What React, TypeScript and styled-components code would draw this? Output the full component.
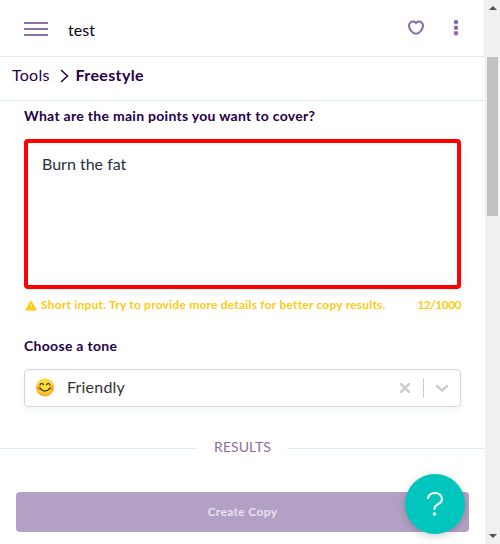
import React from "react";
import styled, { createGlobalStyle } from "styled-components";

const Global = createGlobalStyle`
  * { box-sizing: border-box; }
  body { margin: 0; background: #fff; font-family: Lato, "Liberation Sans", sans-serif; overflow: hidden; }
  button { font-family: inherit; border: 0; padding: 0; background: none; }
`;
const Shell = styled.div`
  display: flex;
  width: 500px;
  height: 544px;
  overflow: hidden;
`;
const Page = styled.main`
  position: relative;
  width: 485px;
  height: 544px;
  background: #fff;
`;
const Text = styled.span<{ $size: number; $weight?: number; $color: string; $track?: number }>`
  font-size: ${(p) => p.$size}px;
  font-weight: ${(p) => p.$weight ?? 400};
  color: ${(p) => p.$color};
  letter-spacing: ${(p) => p.$track ?? 0}px;
  line-height: 20px;
  white-space: nowrap;
`;
const Header = styled.header`
  display: flex;
  align-items: center;
  height: 57px;
  padding: 0 20px 0 24px;
  border-bottom: 1px solid #d9f0e3;
  border-right: 1px solid #d9f0e3;
`;
const Title = styled.div`
  display: flex;
  padding-top: 3px;
`;
const Menu = styled.button`
  display: flex;
  flex-direction: column;
  justify-content: space-between;
  width: 24px;
  height: 14px;
  margin: 2px 20px 0 0;
`;
const Bar = styled.span`
  height: 2px;
  background: #8e73a6;
`;
const Actions = styled.div`
  display: flex;
  align-items: center;
  gap: 24px;
  margin-left: auto;
`;
const Crumbs = styled.nav`
  display: flex;
  align-items: center;
  height: 44px;
  padding: 0 12px 7px;
  border-bottom: 1px solid #d9f0e3;
`;
const Chevron = styled.svg`
  margin: 2px 7px 0 10px;
`;
const Form = styled.section`
  display: flex;
  flex-direction: column;
  padding: 5px 24px 0;
`;
const Label = styled.label`
  display: flex;
  height: 20px;
`;
const Input = styled.div`
  height: 150px;
  margin-top: 13px;
  padding: 11px 14px;
  border: 4px solid #fe0000;
  border-radius: 4px;
  box-shadow: 0 4px 12px rgba(20, 80, 70, 0.04);
`;
const Hint = styled.div`
  display: flex;
  align-items: center;
  height: 20px;
  margin: 6px 0 21px;
`;
const Count = styled.div`
  display: flex;
  margin-left: auto;
`;
const Warning = styled.svg`
  margin: 0 4px 0 1px;
`;
const Select = styled.div`
  display: flex;
  align-items: center;
  height: 38px;
  margin-top: 13px;
  padding: 0 11px 0 10px;
  border: 1px solid #dcd1e8;
  border-radius: 4px;
  box-shadow: 0 4px 10px rgba(20, 110, 90, 0.06);
`;
const Value = styled.div`
  display: flex;
  padding-bottom: 2px;
`;
const Emoji = styled.svg`
  margin-right: 12px;
`;
const Indicators = styled.div`
  display: flex;
  align-items: center;
  margin-left: auto;
`;
const Separator = styled.span`
  width: 1px;
  height: 20px;
  margin: 0 11px 0 12px;
  background: #ccc;
`;
const Results = styled.div`
  display: flex;
  align-items: flex-start;
  gap: 16px;
  height: 20px;
  margin-top: 30px;
`;
const Rule = styled.span`
  flex: 1;
  height: 1px;
  margin-top: 11px;
  background: #dcefeb;
`;
const Create = styled.button`
  display: flex;
  align-items: center;
  justify-content: center;
  width: 453px;
  height: 40px;
  margin: 35px 16px 0;
  border-radius: 4px;
  background: #b2a1c4;
`;
const Help = styled.button`
  position: absolute;
  right: 20px;
  bottom: 10px;
  display: flex;
  align-items: center;
  justify-content: center;
  width: 60px;
  height: 60px;
  border-radius: 50%;
  background: #00c6be;
  box-shadow: 0 2px 8px rgba(0, 0, 0, 0.2);
`;
const Scrollbar = styled.aside`
  display: flex;
  flex-direction: column;
  align-items: center;
  width: 15px;
  padding: 6px 0 6px;
  background: #f0f0f0;
`;
const Thumb = styled.span`
  width: 11px;
  height: 159px;
  margin-top: 47px;
  background: #c1c1c1;
`;
const DownArrow = styled.svg`
  margin-top: auto;
`;

export default function App() {
  return (
    <>
      <Global />
      <Shell>
        <Page>
          <Header>
            <Menu aria-label="Menu"><Bar /><Bar /><Bar /></Menu>
            <Title><Text $size={16} $track={0.1} $color="#090014">test</Text></Title>
            <Actions>
              <svg width="16" height="16" viewBox="0 0 16 16" fill="none" stroke="#8a6ca2" strokeWidth="2">
                <path d="M8 3C6.7 1.3 3.8 1.1 2.3 2.6.3 4.8 1.2 8.3 3.1 10.8c1.4 1.7 3.4 3 4.9 3s3.5-1.3 4.9-3c1.9-2.5 2.8-6 .8-8.2C12.2 1.1 9.3 1.3 8 3Z" />
              </svg>
              <svg width="16" height="18" viewBox="0 0 16 18" fill="#8a6ca2">
                <circle cx="8" cy="3" r="2.2" /><circle cx="8" cy="8.7" r="2.2" /><circle cx="8" cy="14.3" r="2.2" />
              </svg>
            </Actions>
          </Header>
          <Crumbs>
            <Text $size={16} $track={0.25} $color="#270047">Tools</Text>
            <Chevron width="9" height="14" viewBox="0 0 9 14" fill="none" stroke="#270047" strokeWidth="1.5">
              <path d="m1 1 6.5 6L1 13" />
            </Chevron>
            <Text $size={16} $track={0.35} $weight={700} $color="#270047">Freestyle</Text>
          </Crumbs>
          <Form>
            <Label><Text $size={14} $track={0.29} $weight={700} $color="#270047">What are the main points you want to cover?</Text></Label>
            <Input><Text $size={16} $color="#252f3f">Burn the fat</Text></Input>
            <Hint>
              <Warning width="12" height="11" viewBox="0 0 12 11">
                <path d="M6 1 11.3 10H.7Z" fill="#fdcb13" stroke="#fdcb13" strokeLinejoin="round" />
                <path d="M6 4v3M6 8v1" stroke="#fff0b5" />
              </Warning>
              <Text $size={12} $track={0.21} $weight={700} $color="#fdcb13">Short input. Try to provide more details for better copy results.</Text>
              <Count><Text $size={12} $track={-0.55} $weight={700} $color="#fdcb13">12/1000</Text></Count>
            </Hint>
            <Label><Text $size={14} $track={0.3} $weight={700} $color="#270047">Choose a tone</Text></Label>
            <Select>
              <Emoji width="20" height="20" viewBox="0 0 20 20">
                <defs>
                  <radialGradient id="face" cx=".5" cy=".4" r=".6">
                    <stop offset=".5" stopColor="#fde030" /><stop offset="1" stopColor="#f4a51c" />
                  </radialGradient>
                </defs>
                <circle cx="10" cy="9.5" r="9" fill="url(#face)" />
                <circle cx="4" cy="10" r="2" fill="#ff7043" opacity=".65" />
                <circle cx="16" cy="10" r="2" fill="#ff7043" opacity=".65" />
                <path d="M5 7Q6.7 3.8 8.4 6.7M11.6 6.7Q13.3 3.8 15 7M5 10.3Q10 16 15 10.3" fill="none" stroke="#45351f" strokeWidth="1.3" strokeLinecap="round" />
              </Emoji>
              <Value><Text $size={16} $track={0.2} $color="#333">Friendly</Text></Value>
              <Indicators>
                <svg width="12" height="12" viewBox="0 0 12 12" stroke="#ccc" strokeWidth="2.6" strokeLinecap="round">
                  <path d="m2.2 2.2 7.6 7.6m0-7.6-7.6 7.6" />
                </svg>
                <Separator />
                <svg width="14" height="10" viewBox="0 0 14 10" fill="none" stroke="#ccc" strokeWidth="2.4" strokeLinecap="round">
                  <path d="m2 3 5 4.5L12 3" />
                </svg>
              </Indicators>
            </Select>
          </Form>
          <Results>
            <Rule />
            <Text $size={14} $track={0.05} $color="#8a6ca2">RESULTS</Text>
            <Rule />
          </Results>
          <Create><Text $size={12} $track={0.35} $weight={700} $color="#e9e2ef">Create Copy</Text></Create>
          <Help aria-label="Help">
            <svg width="18" height="26" viewBox="0 0 18 26" fill="none" stroke="#fff" strokeWidth="2.1">
              <path d="M2 8C2 4.3 4.8 2 8.8 2s7.2 2.3 7.2 6.2c0 5-7.5 4.8-7.5 9.3v1.2" />
              <circle cx="8.5" cy="23" r="1.8" fill="#fff" stroke="none" />
            </svg>
          </Help>
        </Page>
        <Scrollbar>
          <svg width="8" height="4" viewBox="0 0 8 4" fill="#505050"><path d="M0 4 4 0l4 4Z" /></svg>
          <Thumb />
          <DownArrow width="8" height="4" viewBox="0 0 8 4" fill="#505050"><path d="m0 0 4 4 4-4Z" /></DownArrow>
        </Scrollbar>
      </Shell>
    </>
  );
}
